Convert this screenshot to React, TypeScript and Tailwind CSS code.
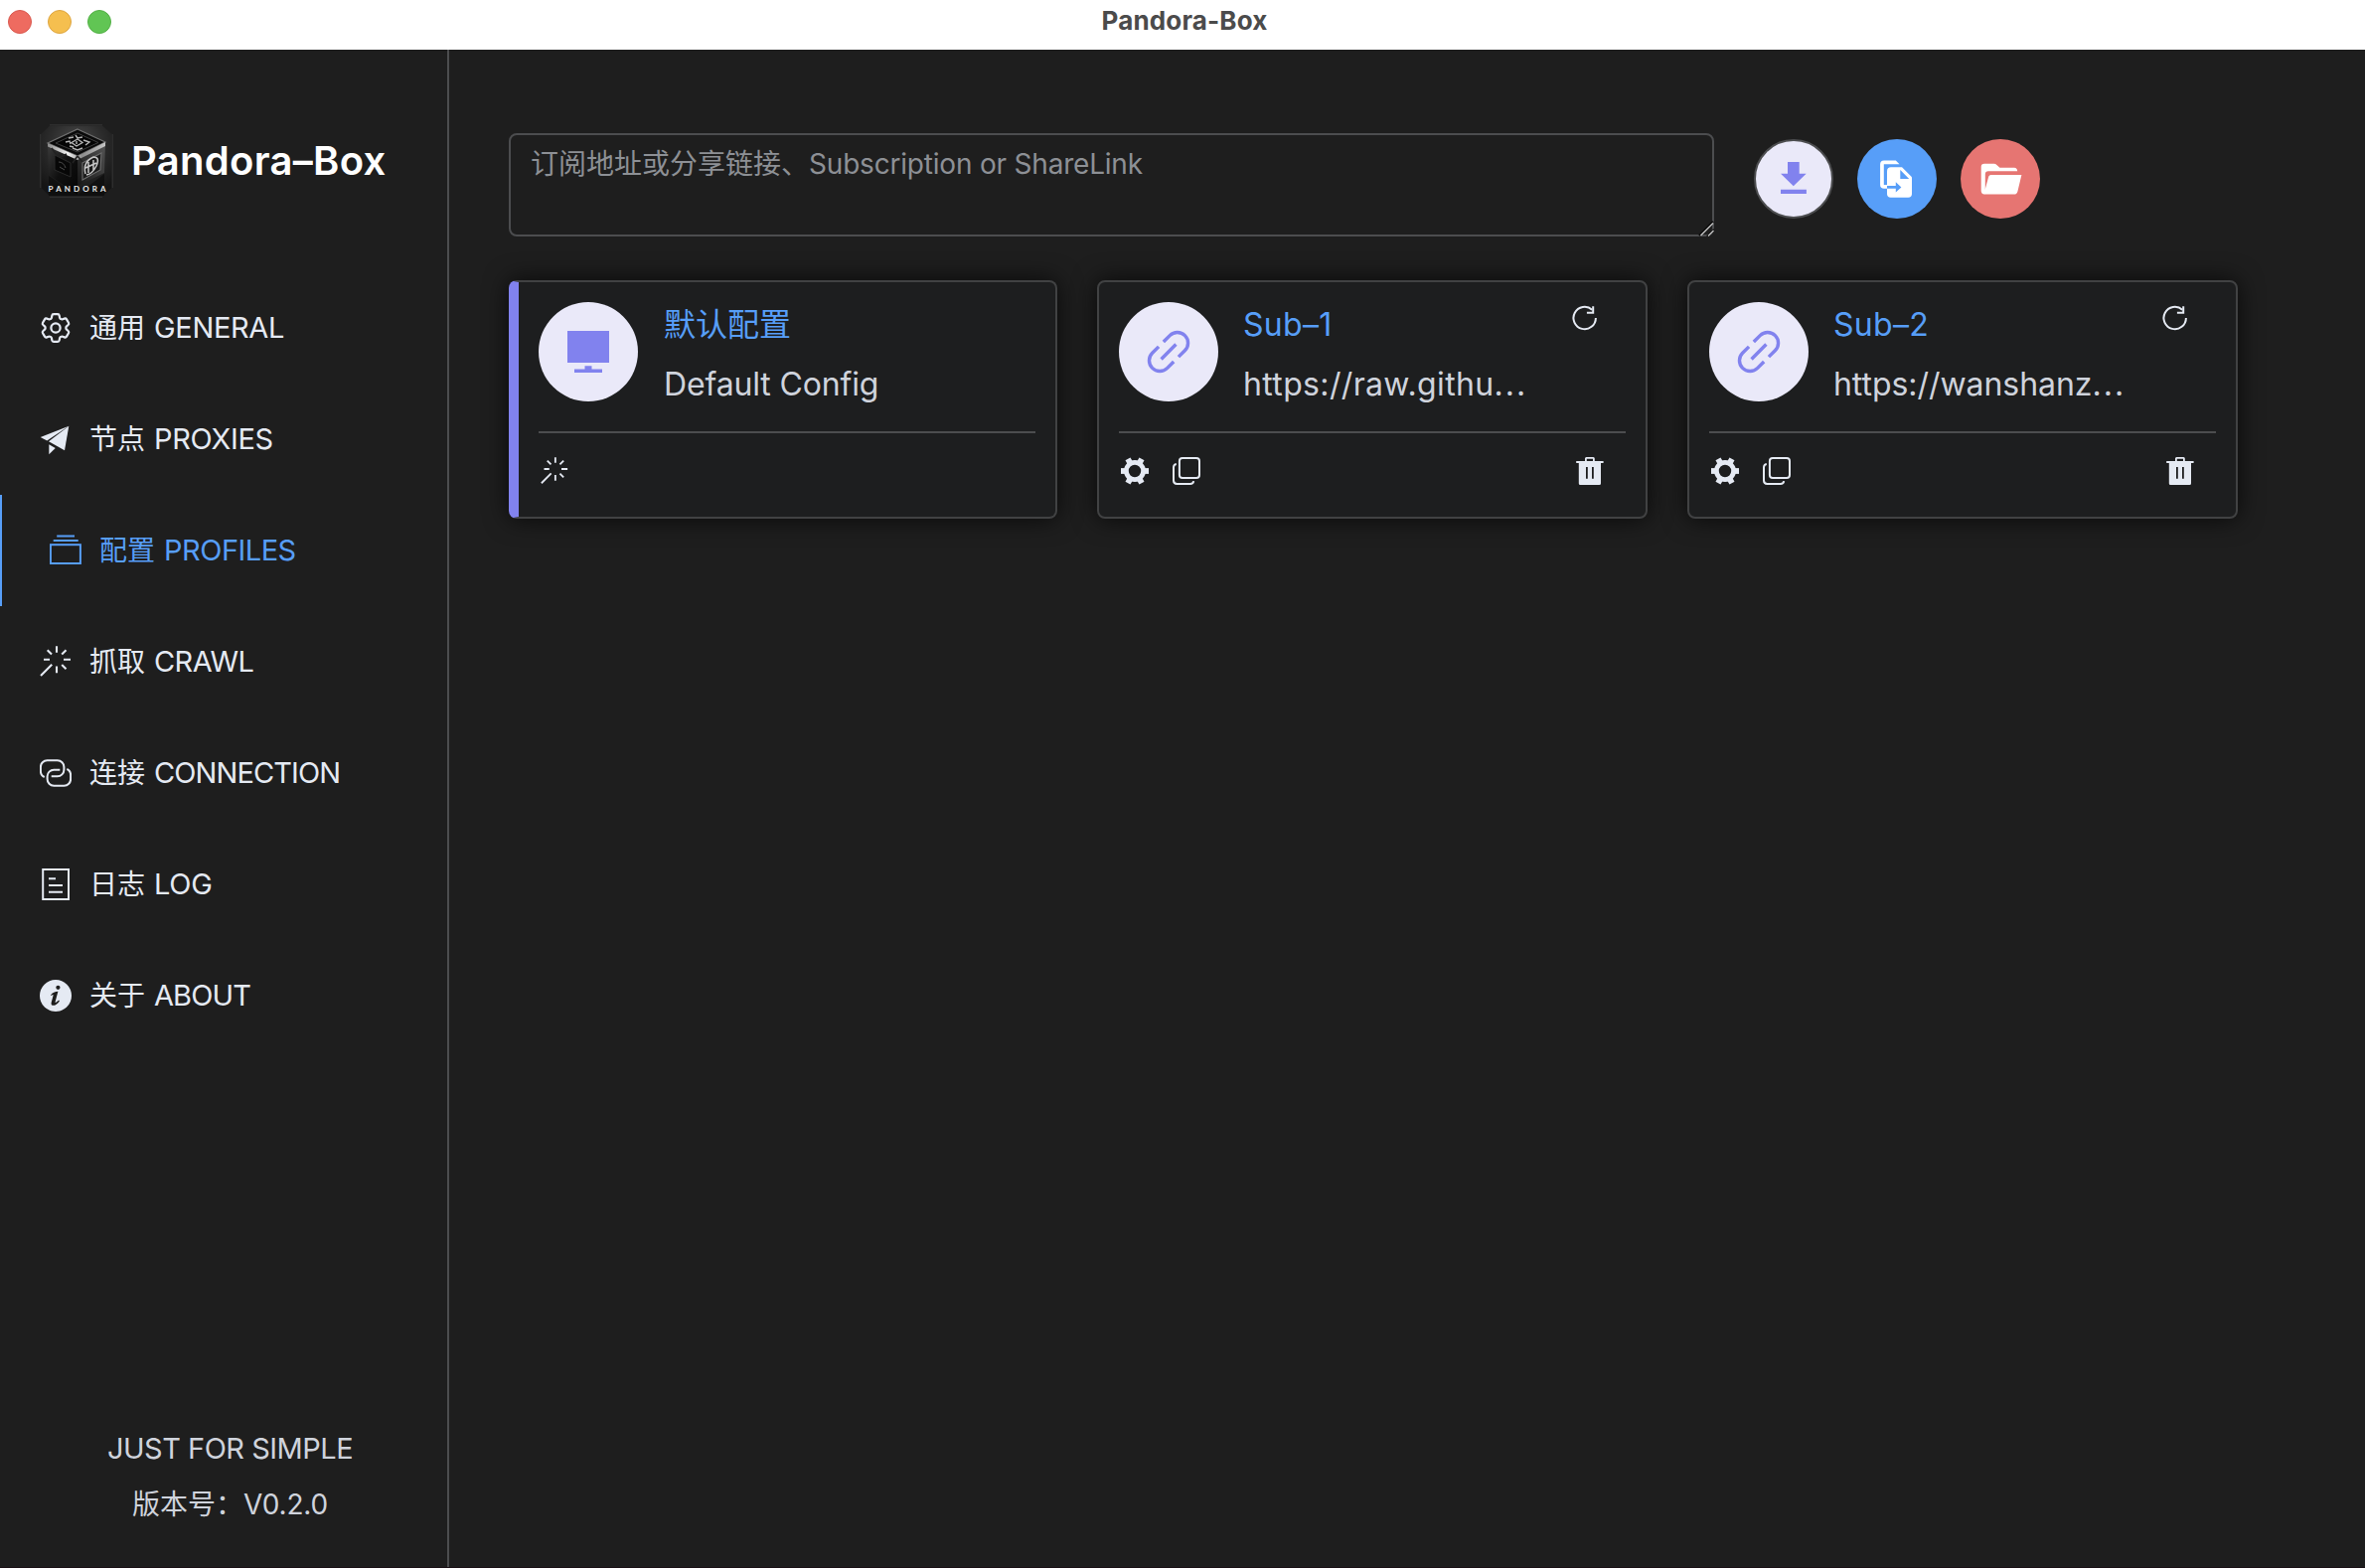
import React from "react";
import { HiOutlineCog6Tooth } from "react-icons/hi2";

type IconProps = { className?: string };

const stroke = {
  fill: "none",
  stroke: "currentColor",
  strokeWidth: 2,
} as const;

function GearOutline({ className }: IconProps) {
  return <HiOutlineCog6Tooth className={className} strokeWidth={1.45} viewBox="1.9 1.6 20.2 20.8" />;
}

function Plane({ className }: IconProps) {
  return (
    <svg viewBox="0 0 32 32" className={className} fill="currentColor">
      <path d="M.7 14 29.3 2.7 7.3 17.4Z" />
      <path d="M29.3 2.7 25 27.3 9 18.3Z" />
      <path d="M9.3 21.3 15.7 25 9.3 31.3Z" />
    </svg>
  );
}

function Stack({ className }: IconProps) {
  return (
    <svg viewBox="0 0 32 32" className={className} {...stroke}>
      <path d="M7.2 1.4H25M3.7 6H28.7" strokeWidth={2} />
      <rect x={0.9} y={10.2} width={30} height={18.8} />
    </svg>
  );
}

function Wand({ className }: IconProps) {
  return (
    <svg viewBox="0 0 32 32" className={className} {...stroke} strokeWidth={2.1}>
      <path d="M17 .3V6.7M17 20.5V27.2M4 13.7H10M24 13.7H31M7.7 4.2 12 8.5M26.5 4.2 22.2 8.5M22.2 19 26.5 23.3M12.2 18.8 1 30" />
    </svg>
  );
}

function Chain({ className }: IconProps) {
  const half = "M4.7 20A6.4 6.4 0 0 1 .9 14.2V10A6.6 6.6 0 0 1 7.5 3.3H17.8A6.6 6.6 0 0 1 24.4 10V12.8A6.6 6.6 0 0 1 17.8 19.3H11.7";
  return (
    <svg viewBox="0 0 32 32" className={className} {...stroke}>
      <path d={half} />
      <path d={half} transform="rotate(180 16 16)" />
    </svg>
  );
}

function LogSheet({ className }: IconProps) {
  return (
    <svg viewBox="0 0 32 32" className={className} {...stroke}>
      <rect x={3.2} y={1} width={25.8} height={30} />
      <path d="M9 10.3H16M9 17H23M9 23.7H23" strokeWidth={2} />
    </svg>
  );
}

function Info({ className }: IconProps) {
  return (
    <svg viewBox="0 0 32 32" className={className}>
      <circle cx={16} cy={16} r={16} fill="currentColor" />
      <circle cx={18.4} cy={7.8} r={2.1} fill="#1e1e1e" />
      <path
        d="M11 15.4C12.8 13.2 15.4 11.8 18.4 11.8L15.6 22.2C15.3 23.6 16.4 23.2 19.2 20.6L19.9 21.4C17.8 24.4 15.6 25.8 13.6 25.8C11.8 25.8 11.2 24.6 11.7 22.7L13.5 15.9C13.8 14.5 13 14.8 11.6 16Z"
        fill="#1e1e1e"
      />
    </svg>
  );
}

function Download({ className }: IconProps) {
  return (
    <svg viewBox="0 0 40 40" className={className} fill="currentColor">
      <path d="M14 3H25.7V14.7H32.7L19.8 27.3 7 14.7H14ZM7 30.8H32.9V35H7Z" />
    </svg>
  );
}

function MoveFile({ className }: IconProps) {
  return (
    <svg viewBox="0 0 40 40" className={className}>
      <path d="M7 1.5H18.8L22.5 5.2H6.8V26H10V29.8H7Q3.1 29.8 3.1 26V5.4Q3.1 1.5 7 1.5Z" fill="white" />
      <path d="M14 8.3H25L35 18.3V35Q35 38.7 31.3 38.7H13.7Q10 38.7 10 35V12.2Q10 8.3 14 8.3Z" fill="white" />
      <path d="M23.3 11 32.2 20H23.3ZM10 27H18.8V23.3L24.4 28.4 18.8 33.5V29.8H10Z" fill="#579ef8" />
    </svg>
  );
}

function FolderOpen({ className }: IconProps) {
  return (
    <svg viewBox="0 0 42 40" className={className} fill="white">
      <path d="M4 4.7H13.6Q15.3 4.7 16.4 5.9L19.5 8.7H34Q37 8.7 37.2 12.3H8Q4.8 12.3 4.8 15.5V30L5.4 34 4 35.6Q.7 35 .7 32V8Q.7 4.7 4 4.7Z" />
      <path d="M10.6 16H41.4L37.4 32.8Q36.7 35.6 34 35.6H4Q3.6 33 4.6 31L8.3 17.6Q8.8 16 10.6 16Z" />
    </svg>
  );
}

function Monitor({ className }: IconProps) {
  return (
    <svg viewBox="0 0 42 42" className={className} fill="currentColor">
      <path d="M0 0H42V32H0ZM17.5 35.2H24.5V38.6H35V42H7V38.6H17.5Z" />
    </svg>
  );
}

function Link({ className }: IconProps) {
  return (
    <svg viewBox="-22 -22 44 44" className={className} {...stroke} strokeWidth={3.4}>
      <g transform="rotate(-45)">
        <path d="M3.4 -10.7H12.5A10.7 10.7 0 0 1 12.5 10.7H3.4M-3.4 -10.7H-12.5A10.7 10.7 0 0 0 -12.5 10.7H-3.4M-10.5 0H10.5" />
      </g>
    </svg>
  );
}

function Refresh({ className }: IconProps) {
  return (
    <svg viewBox="0 0 28 28" className={className} {...stroke}>
      <path d="M24.9 14A11.2 11.2 0 1 1 21.2 5.7" />
      <path d="M22.2 2.2V8.7H15.9" />
    </svg>
  );
}

function GearSolid({ className }: IconProps) {
  return (
    <svg viewBox="0 0 28 28" className={className} fill="none" stroke="currentColor">
      <circle cx={14} cy={14} r={8.6} strokeWidth={4.8} />
      {[0, 60, 120, 180, 240, 300].map((a) => (
        <path key={a} d="M23 14H28" strokeWidth={5.8} transform={`rotate(${a} 14 14)`} />
      ))}
    </svg>
  );
}

function Copy({ className }: IconProps) {
  return (
    <svg viewBox="0 0 28 28" className={className} {...stroke}>
      <rect x={6.9} y={1} width={20.1} height={20.1} rx={3} />
      <path d="M3.8 6.9Q1 7.4 1 10.2V23.6Q1 27 4.4 27H17.8Q20.8 27 21.2 24.1" />
    </svg>
  );
}

function Trash({ className }: IconProps) {
  return (
    <svg viewBox="0 0 28 28" className={className} fill="currentColor">
      <path
        d="M10.4 0H17.4Q18.8 0 18.8 1.5V4H27.6V5.9H25V26.5Q25 28 23.5 28H4.3Q2.8 28 2.8 26.5V5.9H.2V4H9V1.5Q9 0 10.4 0ZM10.8 1.8V4H17V1.8ZM10 10V21.8H11.8V10ZM16 10V21.8H17.8V10Z"
        fillRule="evenodd"
      />
    </svg>
  );
}

function Logo() {
  return (
    <svg viewBox="0 0 74 74" className="h-[74px] w-[74px]">
      <defs>
        <radialGradient id="bg" cx=".5" cy=".25" r=".75">
          <stop offset="0" stopColor="#4a4a4a" />
          <stop offset=".5" stopColor="#2c2c2c" />
          <stop offset="1" stopColor="#151515" />
        </radialGradient>
        <linearGradient id="left" x1="0" y1="0" x2="1" y2="1">
          <stop offset="0" stopColor="#3c3c3c" />
          <stop offset=".5" stopColor="#101010" />
          <stop offset="1" stopColor="#050505" />
        </linearGradient>
        <linearGradient id="right" x1="1" y1="0" x2="0" y2="1">
          <stop offset="0" stopColor="#555" />
          <stop offset="1" stopColor="#161616" />
        </linearGradient>
        <linearGradient id="rim" x1="0" y1="0" x2="1" y2="0">
          <stop offset="0" stopColor="#8a8a8a" />
          <stop offset=".35" stopColor="#f4f4f4" />
          <stop offset=".6" stopColor="#8c8c8c" />
          <stop offset="1" stopColor="#c4c4c4" />
        </linearGradient>
      </defs>
      <path d="M10 1.5H63L72.5 10V64L63 72.5H10L1.5 64V10Z" fill="url(#bg)" />
      <path d="M10 .8H63M10 73.2H63M.8 10V64M73.2 10V64" stroke="#353535" strokeWidth={1} />
      <path d="M38 5 66 18 38 32 8 19Z" fill="#0a0a0a" stroke="#6f6f6f" strokeWidth={1.2} />
      <path d="M38 9 59 18.5 38 28 16 19Z" fill="#050505" stroke="#3c3c3c" />
      <path d="M26 18 30 17 31 20M29 14 34 13M36 11 38 14 43 13M44 16 50 18 46 21M33 24 38 26 43 24M30 22 34 23M38 15 43 18.5 37 22 32 18.5ZM37 17V20" fill="none" stroke="#b4b4b4" strokeWidth={1.4} />
      <path d="M8 19 38 32V71L9 51Z" fill="url(#left)" />
      <path d="M38 32 66 18 65 49 38 62Z" fill="url(#right)" />
      <path d="M8 19 38 32 66 18 66 22 38 36 8 22.5Z" fill="url(#rim)" />
      <path d="M12 24 19 34 27 30M38 32 33 39M38 32 43 38" stroke="#222" strokeWidth={1.6} fill="none" />
      <path d="M43 39 62 29 61 46 43 56Z" fill="#1b1b1b" stroke="#6e6e6e" strokeWidth={1.1} />
      <path d="M46 50Q43 38 54 33Q61 33 57 42Q53 50 47 51M49 38V49M54 36V46M46 44 57 39" fill="none" stroke="#c6c6c6" strokeWidth={1.5} />
      <path d="M15 31 31 39V53L15 46Z" fill="#070707" stroke="#2a2a2a" />
      <path d="M19 38Q24 38 26 44M20 43 25 46" fill="none" stroke="#4c4c4c" />
      <path d="M9 52 38 71 65 50V72H9Z" fill="#0d0d0d" opacity={0.75} />
      <text x={8.6} y={67.8} fill="#e8e8e8" fontSize={8} fontWeight={700} fontFamily="Lato, sans-serif" textLength={58} lengthAdjust="spacing">
        PANDORA
      </text>
    </svg>
  );
}

const navItems = [
  { zh: "通用", en: "GENERAL", Icon: GearOutline, track: "tracking-[-0.35px]" },
  { zh: "节点", en: "PROXIES", Icon: Plane, track: "tracking-[-0.3px]" },
  { zh: "配置", en: "PROFILES", Icon: Stack, active: true, track: "tracking-[-0.5px]" },
  { zh: "抓取", en: "CRAWL", Icon: Wand, track: "tracking-[-0.6px]" },
  { zh: "连接", en: "CONNECTION", Icon: Chain, track: "tracking-[-0.9px]" },
  { zh: "日志", en: "LOG", Icon: LogSheet, track: "tracking-[-0.3px]" },
  { zh: "关于", en: "ABOUT", Icon: Info, track: "tracking-[-0.9px]" },
];

function Sidebar() {
  return (
    <aside className="flex w-[452px] shrink-0 flex-col border-r-2 border-[#4c4d4f]">
      <div className="flex items-center pt-[75px] pl-10">
        <Logo />
        <h1 className="ml-[18px] text-[40px] leading-[72px] font-semibold tracking-[0.3px] text-white">Pandora–Box</h1>
      </div>
      <nav className="mt-[75px]">
        {navItems.map(({ zh, en, Icon, active, track }) => (
          <a
            key={en}
            className={
              active
                ? "flex h-28 items-center border-l-2 border-[#579ef8] pl-12 text-[#579ef8]"
                : "flex h-28 items-center pl-10 text-[#e5eaf3]"
            }
          >
            <Icon className="h-8 w-8" />
            <span className="ml-[18px] flex text-[28px] leading-[56px]">
              <span>{zh}</span>
              <span className={`ml-[9px] text-[29px] ${track}`}>{en}</span>
            </span>
          </a>
        ))}
      </nav>
      <footer className="mt-auto pb-[35px] pl-[13px] text-center text-[28px] leading-[56px] text-[#cfd3dc]">
        <p className="text-[29px] tracking-[-0.5px]">JUST FOR SIMPLE</p>
        <p>
          版本号：<span className="tracking-[-0.2px]">V0.2.0</span>
        </p>
      </footer>
    </aside>
  );
}

function ImportBar() {
  return (
    <div className="flex items-start">
      <div className="relative h-[104px] w-[1213px] rounded-lg border-2 border-[#4c4d4f] px-5 py-2 text-[28px] leading-[42px] text-[#8d9095]">
        订阅地址或分享链接、<span className="tracking-[-0.2px]">Subscription or ShareLink</span>
        <svg viewBox="0 0 16 16" className="absolute -right-0.5 -bottom-0.5 h-4 w-4" fill="none">
          <path d="M1 15 15 1M9 16 16 9" stroke="#0c0c0c" strokeWidth={2.4} />
          <path d="M2.5 15 15 2.5M10 15.5 15.5 10" stroke="#c4c4c4" strokeWidth={1.4} />
        </svg>
      </div>
      <div className="mt-1.5 ml-10 flex gap-6">
        <button className="flex h-20 w-20 items-center justify-center rounded-full border-2 border-[#4c4d4f] bg-[#eae9f9] text-[#8182ee]">
          <Download className="h-10 w-10" />
        </button>
        <button className="flex h-20 w-20 items-center justify-center rounded-full bg-[#579ef8]">
          <MoveFile className="h-10 w-10" />
        </button>
        <button className="flex h-20 w-20 items-center justify-center rounded-full bg-[#e67572]">
          <FolderOpen className="ml-0.5 h-10 w-[42px]" />
        </button>
      </div>
    </div>
  );
}

type CardProps = {
  name: React.ReactNode;
  detail: React.ReactNode;
  isDefault?: boolean;
};

function ProfileCard({ name, detail, isDefault }: CardProps) {
  return (
    <section
      className={
        isDefault
          ? "h-60 rounded-lg border-2 border-l-[10px] border-[#414243] border-l-[#8182ee] bg-[#1d1e1f] px-5 pt-5 shadow-[0_0_24px_rgba(0,0,0,0.72)]"
          : "h-60 rounded-lg border-2 border-[#414243] bg-[#1d1e1f] px-5 pt-5 shadow-[0_0_24px_rgba(0,0,0,0.72)]"
      }
    >
      <div className="flex h-[130px]">
        <div className="flex h-[100px] w-[100px] shrink-0 items-center justify-center rounded-full bg-[#eae9f9] text-[#8182ee]">
          {isDefault ? <Monitor className="h-[42px] w-[42px]" /> : <Link className="h-11 w-11" />}
        </div>
        <div className={isDefault ? "ml-[26px] flex-1 text-[32px] leading-[60px] whitespace-nowrap" : "ml-[25px] flex-1 text-[32px] leading-[60px] whitespace-nowrap"}>
          <div className="-mt-[7px] text-[#579ef8]">{name}</div>
          <div className="text-[#cfd3dc]">{detail}</div>
        </div>
        {!isDefault && <Refresh className="mt-0.5 mr-[27px] h-7 w-7 text-[#e5eaf3]" />}
      </div>
      <div className="h-[26px] border-t-2 border-[#4c4d4f]" />
      <div className="flex px-0.5 text-[#e5eaf3]">
        {isDefault ? (
          <Wand className="h-7 w-7" />
        ) : (
          <>
            <GearSolid className="h-7 w-7" />
            <Copy className="ml-6 h-7 w-7" />
            <Trash className="mr-5 ml-auto h-7 w-7" />
          </>
        )}
      </div>
    </section>
  );
}

export default function App() {
  return (
    <div className="flex h-[1578px] w-[2380px] flex-col overflow-hidden border-b border-[#1a1015] bg-[#1e1e1e] font-['Inter','Noto_Sans_CJK_SC',sans-serif]">
      <header className="relative flex h-[50px] shrink-0 justify-center bg-white">
        <div className="absolute top-2.5 left-2 flex gap-4">
          <i className="h-6 w-6 rounded-full border border-[#d9594f] bg-[#ee6b60]" />
          <i className="h-6 w-6 rounded-full border border-[#dea642] bg-[#f5bf4f]" />
          <i className="h-6 w-6 rounded-full border border-[#53b046] bg-[#61c554]" />
        </div>
        <span className="pl-1 text-[26px] leading-[42px] font-bold tracking-[0.15px] text-[#4b4b4b]">Pandora-Box</span>
      </header>
      <div className="flex flex-1">
        <Sidebar />
        <main className="flex-1 pt-[84px] pl-[60px]">
          <ImportBar />
          <div className="mt-11 grid w-[1740px] grid-cols-[552px_554px_554px] gap-10">
            <ProfileCard name="默认配置" detail={<span className="tracking-[-0.15px]">Default Config</span>} isDefault />
            <ProfileCard
              name={<span className="tracking-[0.3px]">Sub–1</span>}
              detail={
                <span className="tracking-[0.35px]">
                  https://raw.githu<span className="tracking-[2px]">...</span>
                </span>
              }
            />
            <ProfileCard
              name={<span className="tracking-[0.3px]">Sub–2</span>}
              detail={
                <span className="tracking-[-0.05px]">
                  https://wanshanz<span className="tracking-[2px]">...</span>
                </span>
              }
            />
          </div>
        </main>
      </div>
    </div>
  );
}
